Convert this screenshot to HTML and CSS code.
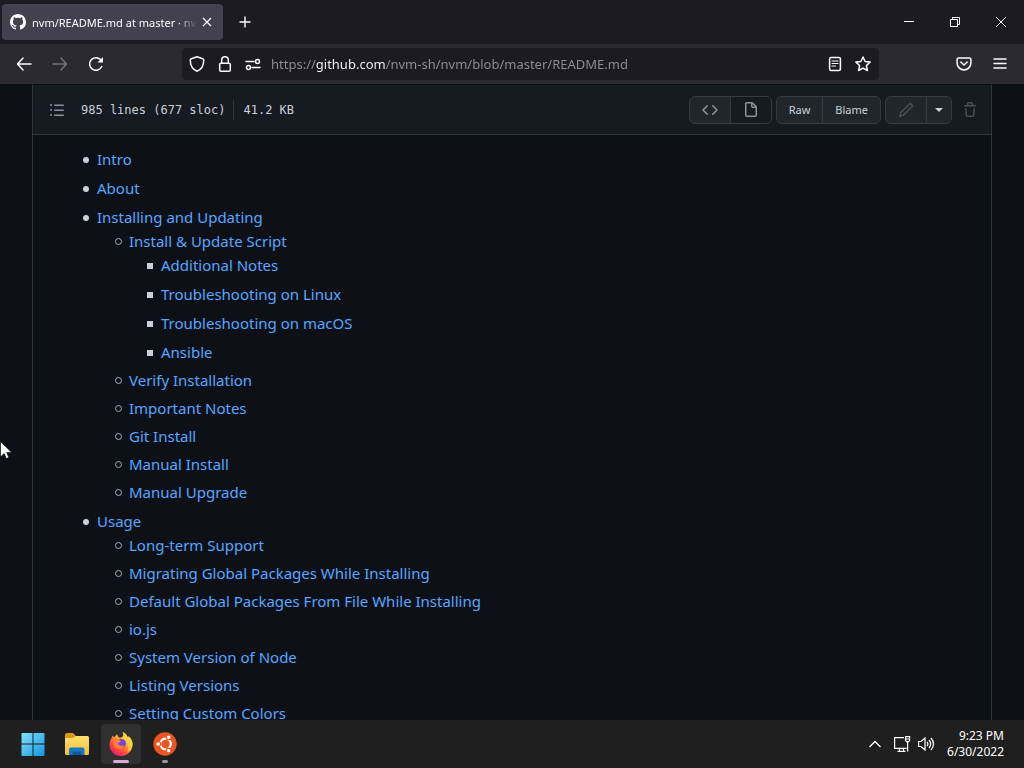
FILE: index.html
```html
<!DOCTYPE html>
<html lang="en">
<head>
<meta charset="utf-8">
<title>nvm/README.md at master · nvm-sh/nvm</title>
<link rel="stylesheet" href="styles.css">
</head>
<body>
<header class="titlebar">
  <div class="tab">
    <svg class="favicon" viewBox="0 0 16 16" width="16" height="16" fill="currentColor" aria-hidden="true"><path d="M8 0C3.58 0 0 3.58 0 8c0 3.54 2.29 6.53 5.47 7.59.4.07.55-.17.55-.38 0-.19-.01-.82-.01-1.49-2.01.37-2.53-.49-2.69-.94-.09-.23-.48-.94-.82-1.13-.28-.15-.68-.52-.01-.53.63-.01 1.08.58 1.23.82.72 1.21 1.87.87 2.33.66.07-.52.28-.87.51-1.07-1.78-.2-3.64-.89-3.64-3.95 0-.87.31-1.59.82-2.15-.08-.2-.36-1.02.08-2.12 0 0 .67-.21 2.2.82.64-.18 1.32-.27 2-.27.68 0 1.36.09 2 .27 1.53-1.04 2.2-.82 2.2-.82.44 1.1.16 1.92.08 2.12.51.56.82 1.27.82 2.15 0 3.07-1.87 3.75-3.65 3.95.29.25.54.73.54 1.48 0 1.07-.01 1.93-.01 2.2 0 .21.15.46.55.38A8.013 8.013 0 0016 8c0-4.42-3.58-8-8-8z"/></svg>
    <span class="tab-title">nvm/README.md at master · nvm</span>
    <button class="tab-close" type="button" aria-label="Close tab"><svg viewBox="0 0 10 10" width="10" height="10" fill="none" stroke="currentColor" stroke-width="1.2"><path d="M1 1l8 8M9 1L1 9"/></svg></button>
  </div>
  <button class="new-tab" type="button" aria-label="New tab"><svg viewBox="0 0 12 12" width="12" height="12" fill="none" stroke="currentColor" stroke-width="1.4"><path d="M6 .5v11M.5 6h11"/></svg></button>
  <div class="window-controls">
    <button type="button" aria-label="Minimize"><svg viewBox="0 0 10 10" width="10" height="10" fill="none" stroke="currentColor"><path d="M0 4.5h10"/></svg></button>
    <button type="button" aria-label="Restore"><svg viewBox="0 0 10 10" width="10" height="10" fill="none" stroke="currentColor"><path d="M.5 2.5h7v7h-7zM2.5 2.500V.5h7v7H7.500"/></svg></button>
    <button type="button" aria-label="Close"><svg viewBox="0 0 10 10" width="10" height="10" fill="none" stroke="currentColor"><path d="M0 0l10 10M10 0L0 10"/></svg></button>
  </div>
</header>

<nav class="toolbar" aria-label="Browser">
  <button class="tool" type="button" aria-label="Back"><svg viewBox="0 0 16 16" width="16" height="16" class="line"><path d="M15 8H1.500M7 2L1.500 8 7 14"/></svg></button>
  <button class="tool" type="button" aria-label="Forward" disabled><svg viewBox="0 0 16 16" width="16" height="16" class="line"><path d="M1 8h13.500M9 2l5.500 6L9 14"/></svg></button>
  <button class="tool" type="button" aria-label="Reload"><svg viewBox="0 0 16 16" width="16" height="16" class="line"><path d="M13.700 10.500A6.300 6.300 0 1 1 12.500 3.600L14 5"/><path d="M15 1v5.500H9.500z" fill="currentColor" stroke="none"/></svg></button>
  <div class="urlbar">
    <button type="button" aria-label="Tracking protection"><svg viewBox="0 0 16 16" width="16" height="16" class="line"><path d="M8 .8l5.700 2c.8.300 1 .8 1 1.500 0 5-2.200 9.200-6.700 10.900C3.500 13.500 1.300 9.300 1.300 4.300c0-.7.2-1.200 1-1.500z"/></svg></button>
    <button type="button" aria-label="Connection secure"><svg viewBox="0 0 16 16" width="16" height="16" class="line"><rect x="2.700" y="7.300" width="10.600" height="7.900" rx="1.300"/><path d="M4.700 7V4a3.300 3.300 0 0 1 6.600 0v3"/></svg></button>
    <button type="button" aria-label="Permissions"><svg viewBox="0 0 16 16" width="16" height="16" class="line"><path d="M1 5.500h8M7 11.500h8"/><circle cx="12.500" cy="5.500" r="2"/><circle cx="3.500" cy="11.500" r="2"/></svg></button>
    <input class="url" type="text" aria-label="Address" value="https://github.com/nvm-sh/nvm/blob/master/README.md">
    <button type="button" aria-label="Reader view"><svg viewBox="0 0 16 16" width="16" height="16" class="line"><rect x="2.600" y="1.600" width="10.800" height="12.800" rx="1.500"/><path stroke-width="1.200" d="M5 5h6M5 7.500h6M5 10h3.500"/></svg></button>
    <button type="button" aria-label="Bookmark"><svg viewBox="0 0 16 16" width="16" height="16" class="line"><path d="M8 1l2.100 4.500 5 .6-3.700 3.400 1 5L8 12.100l-4.400 2.400 1-5L.9 6.100l5-.6z"/></svg></button>
  </div>
  <button class="tool" type="button" aria-label="Save to Pocket"><svg viewBox="0 0 16 16" width="16" height="16" class="line"><path d="M2.500 2h11a1.400 1.400 0 0 1 1.400 1.400V7A6.900 6.900 0 0 1 1.100 7V3.400A1.400 1.400 0 0 1 2.500 2z"/><path d="M4.800 6L8 9l3.200-3"/></svg></button>
  <button class="tool" type="button" aria-label="Menu"><svg viewBox="0 0 16 16" width="16" height="16" class="line"><path d="M2 3h12M2 7.500h12M2 12h12"/></svg></button>
</nav>

<main class="page">
  <section class="file">
    <div class="file-header">
      <button class="bare" type="button" aria-label="Table of contents"><svg viewBox="0 0 16 16" width="16" height="16" fill="currentColor"><path d="M2 4a1 1 0 100-2 1 1 0 000 2zm3.750-1.500a.75.75 0 000 1.500h8.500a.75.75 0 000-1.500h-8.500zm0 5a.75.75 0 000 1.500h8.500a.75.75 0 000-1.500h-8.500zm0 5a.75.75 0 000 1.500h8.500a.75.75 0 000-1.500h-8.500zM3 8a1 1 0 11-2 0 1 1 0 012 0zm-1 6a1 1 0 100-2 1 1 0 000 2z"/></svg></button>
      <div class="file-info"><span>985 lines (677 sloc)</span><span class="size">41.2 KB</span></div>
      <div class="actions">
        <div class="group wide">
          <button type="button" aria-label="Source"><svg viewBox="0 0 16 16" width="16" height="16" fill="currentColor"><path d="M4.720 3.220a.75.75 0 011.060 1.060L2.060 8l3.720 3.720a.75.75 0 11-1.060 1.060L.47 8.530a.75.75 0 010-1.060l4.250-4.250zm6.560 0a.75.75 0 10-1.060 1.060L13.940 8l-3.720 3.720a.75.75 0 101.060 1.060l4.250-4.250a.75.75 0 000-1.060l-4.250-4.250z"/></svg></button>
          <button class="selected" type="button" aria-label="Rendered"><svg viewBox="0 0 16 16" width="16" height="16" fill="currentColor"><path d="M3.750 1.500a.25.25 0 00-.25.25v11.500c0 .138.112.25.25.25h8.500a.25.25 0 00.25-.25V6H9.750A1.750 1.750 0 018 4.250V1.500H3.750zm5.750.56v2.190c0 .138.112.25.25.25h2.190L9.500 2.060zM2 1.750C2 .784 2.784 0 3.750 0h5.086c.464 0 .909.184 1.237.513l3.414 3.414c.329.328.513.773.513 1.237v8.086A1.750 1.750 0 0112.250 15h-8.500A1.750 1.750 0 012 13.250V1.750z"/></svg></button>
        </div>
        <div class="group">
          <button type="button">Raw</button>
          <button type="button">Blame</button>
        </div>
        <div class="group edit">
          <button type="button" aria-label="Edit" disabled><svg viewBox="0 0 16 16" width="16" height="16" fill="currentColor"><path d="M11.013 1.427a1.750 1.750 0 012.474 0l1.086 1.086a1.750 1.750 0 010 2.474l-8.610 8.610c-.21.21-.47.364-.756.445l-3.251.93a.75.75 0 01-.927-.928l.929-3.250a1.750 1.750 0 01.445-.758l8.610-8.610zm1.414 1.060a.25.25 0 00-.354 0L4.200 10.360l-.8.845-.558 1.953 1.953-.558 8.718-8.673a.25.25 0 000-.354l-1.086-1.086z"/></svg></button>
          <button class="caret" type="button" aria-label="More edit options"><svg viewBox="0 0 8 4" width="8" height="4" fill="currentColor"><path d="M0 0h8L4 4z"/></svg></button>
        </div>
        <button class="bare trash" type="button" aria-label="Delete" disabled><svg viewBox="0 0 16 16" width="16" height="16" fill="currentColor"><path fill-rule="evenodd" d="M6.500 1.750a.25.25 0 01.25-.25h2.500a.25.25 0 01.25.25V3h-3V1.750zm4.500 0V3h2.250a.75.75 0 010 1.500H2.750a.75.75 0 010-1.500H5V1.750C5 .784 5.784 0 6.750 0h2.500C10.216 0 11 .784 11 1.750zM4.496 6.675a.75.75 0 10-1.492.15l.66 6.600A1.750 1.750 0 005.405 15h5.190c.9 0 1.652-.681 1.741-1.576l.66-6.600a.75.75 0 00-1.492-.149l-.66 6.600a.25.25 0 01-.249.225h-5.190a.25.25 0 01-.249-.225l-.66-6.600z"/></svg></button>
      </div>
    </div>
    <ul class="toc">
      <li><a href="#intro">Intro</a></li>
      <li><a href="#about">About</a></li>
      <li><a href="#installing">Installing and Updating</a>
        <ul>
          <li><a href="#script">Install &amp; Update Script</a>
            <ul>
              <li><a href="#notes">Additional Notes</a></li>
              <li><a href="#linux">Troubleshooting on Linux</a></li>
              <li><a href="#macos">Troubleshooting on macOS</a></li>
              <li><a href="#ansible">Ansible</a></li>
            </ul>
          </li>
          <li><a href="#verify">Verify Installation</a></li>
          <li><a href="#important">Important Notes</a></li>
          <li><a href="#git">Git Install</a></li>
          <li><a href="#manual-install">Manual Install</a></li>
          <li><a href="#manual-upgrade">Manual Upgrade</a></li>
        </ul>
      </li>
      <li><a href="#usage">Usage</a>
        <ul>
          <li><a href="#lts">Long-term Support</a></li>
          <li><a href="#migrating">Migrating Global Packages While Installing</a></li>
          <li><a href="#default">Default Global Packages From File While Installing</a></li>
          <li><a href="#iojs">io.js</a></li>
          <li><a href="#system">System Version of Node</a></li>
          <li><a href="#listing">Listing Versions</a></li>
          <li><a href="#colors">Setting Custom Colors</a></li>
        </ul>
      </li>
    </ul>
  </section>
</main>

<footer class="taskbar">
  <div class="apps">
    <button type="button" aria-label="Start"><svg viewBox="0 0 24 24" width="24" height="24"><defs><linearGradient id="win" x1="0" y1="0" x2="1" y2="1"><stop offset="0" stop-color="#7fe3fb"/><stop offset="1" stop-color="#1395e0"/></linearGradient></defs><path fill="url(#win)" d="M1.500 1H11.500V11.500H.5V2Q.5 1 1.500 1zM12.500 1h10q1 0 1 1v9.500h-11zM.5 12.500h11V24h-10q-1 0-1-1zM12.500 12.500h11V23q0 1-1 1h-10z"/></svg></button>
    <button type="button" aria-label="File Explorer"><svg viewBox="0 0 24 24" width="24" height="24"><defs><linearGradient id="fold" x1="0" y1="0" x2="0" y2="1"><stop offset="0" stop-color="#ffe071"/><stop offset="1" stop-color="#f5bd34"/></linearGradient></defs><path fill="#d99a16" d="M0 3q0-2 2-2h6l3 3v4H0z"/><path fill="url(#fold)" d="M0 6h8l3-2h11.500Q24 4 24 5.500v16q0 1.500-1.500 1.500h-21Q0 23 0 21.500z"/><path fill="#1678c2" d="M4 23v-5.500q0-2 2-2h11.500q2 0 2 2V23z"/><path fill="#0f579b" d="M7.500 19.500h9V23h-9z"/></svg></button>
    <button class="active" type="button" aria-label="Firefox"><svg viewBox="0 0 24 24" width="24" height="24"><defs><linearGradient id="fox" x1=".85" y1=".1" x2=".2" y2=".95"><stop offset="0" stop-color="#fff044"/><stop offset=".35" stop-color="#ffb02e"/><stop offset=".65" stop-color="#ff5638"/><stop offset="1" stop-color="#ec1770"/></linearGradient></defs><path fill="url(#fox)" d="M13.500 0c3 1.200 5 3.600 5.700 6.400.2-.8.100-1.700-.1-2.500 3 2 4.500 5.300 4.500 8.700C23.600 19 18.500 24 12 24S.6 19 .6 12.700c0-2.700.8-5.200 2.300-7.200l.4-2 2 1.700C6.400 4.500 7 2.900 8.200 2c0 1.500.8 2.900 2.300 3.700 1.500.3 2.500-.3 3.400-1.400.9-1.300.7-3-.4-4.300z"/><circle cx="12.300" cy="11.500" r="4.600" fill="#7542e5"/><path fill="#ff812f" d="M4.800 7.200c3-.8 5.800.2 7.100 1.800-.3 1.200-2.700 1.500-3 2.600 1.400 2.700 4.200 2.600 6.200 1.500-.7 3.700-4.600 5.200-7.500 3.400C4.400 14.500 3.500 10.500 4.800 7.200z"/><path fill="#ffd53c" d="M13.500 0c3 1.200 5 3.600 5.700 6.400.2-.8.100-1.700-.1-2.500 3 2 4.500 5.300 4.500 8.700-1 4-2.300 5.900-4.800 7.400 1-4.800.6-10-4.900-13.700.9-1.800.8-4-.4-6.300z" opacity=".75"/></svg><span class="mark"></span></button>
    <button class="running" type="button" aria-label="Ubuntu"><svg viewBox="0 0 24 24" width="24" height="24"><circle cx="12" cy="12" r="11.700" fill="#e95420"/><circle cx="12.500" cy="12" r="5.300" fill="none" stroke="#fff" stroke-width="2.200"/><g stroke="#e95420" stroke-width="1.200" fill="#fff"><circle cx="5.200" cy="12" r="2.400"/><circle cx="15.700" cy="5.400" r="2.400"/><circle cx="15.700" cy="18.600" r="2.400"/></g></svg><span class="mark"></span></button>
  </div>
  <div class="tray">
    <button type="button" aria-label="Show hidden icons"><svg viewBox="0 0 12 8" width="12" height="8" fill="none" stroke="currentColor" stroke-width="1.300"><path d="M.5 7L6 1.500 11.500 7"/></svg></button>
    <button type="button" aria-label="Network"><svg viewBox="0 0 18 18" width="18" height="18" fill="none" stroke="currentColor" stroke-width="1.200"><path d="M11 2.600H1.600v10.800h12M4.500 16.400h8M6.500 13.500v3M10.500 13.500v3M12.600 1.600h4v4l-1 1h-2l-1-1zM14.600 6.600v10M13 4h3.500"/></svg></button>
    <button type="button" aria-label="Volume"><svg viewBox="0 0 18 16" width="18" height="16" fill="none" stroke="currentColor" stroke-width="1.200"><path d="M1.600 5.500H4L8 2v12l-4-3.500H1.600zM10 5.800q1.800 2.200 0 4.400M12 4q3.300 4 0 8M14 2q5 6 0 12"/></svg></button>
    <time class="clock" datetime="2022-06-30T21:23"><span>9:23 PM</span><span>6/30/2022</span></time>
  </div>
</footer>

<svg class="pointer" viewBox="0 0 12 18" width="12" height="18" aria-hidden="true"><path fill="#fff" stroke="#000" stroke-width=".6" d="M.5.5v15.500l3.600-3.400 2.300 5 2.500-1-2.200-5h5z"/></svg>
</body>
</html>
```
FILE: styles.css
```css
*, *::before { box-sizing: border-box; }

body {
  margin: 0;
  height: 100vh;
  display: flex;
  flex-direction: column;
  overflow: hidden;
  background: #0d1117;
  color: #c9d1d9;
  font-family: "Noto Sans", "Open Sans", sans-serif;
  font-size: 15px;
}

button {
  display: inline-flex;
  align-items: center;
  justify-content: center;
  padding: 0;
  border: 0;
  background: none;
  color: inherit;
  font: inherit;
}

svg { flex: none; }

.line {
  fill: none;
  stroke: currentColor;
  stroke-width: 1.5;
  stroke-linecap: round;
  stroke-linejoin: round;
}

/* Tab strip */
.titlebar {
  flex: none;
  display: flex;
  height: 44px;
  padding-left: 2px;
  background: #1c1b22;
  color: #fbfbfe;
}

.tab {
  display: flex;
  align-items: center;
  width: 221px;
  height: 36px;
  margin-top: 4px;
  padding: 0 6px 0 8px;
  border-radius: 4px;
  background: #42414d;
}

.tab-title {
  flex: 1;
  min-width: 0;
  margin-left: 6px;
  overflow: hidden;
  white-space: nowrap;
  font-size: 11px;
  -webkit-mask-image: linear-gradient(to left, transparent, #000 20px);
  mask-image: linear-gradient(to left, transparent, #000 20px);
}

.tab-close { width: 20px; height: 20px; }
.new-tab { width: 36px; margin-left: 4px; }

.window-controls {
  display: flex;
  margin-left: auto;
}
.window-controls button { width: 46px; }

/* Navigation toolbar */
.toolbar {
  flex: none;
  display: flex;
  align-items: center;
  height: 40px;
  padding: 0 6px;
  background: #2b2a33;
  color: #fbfbfe;
}

.tool { width: 36px; height: 32px; }
.tool:disabled { color: #74737b; }

.urlbar {
  flex: 1;
  display: flex;
  align-items: center;
  height: 32px;
  margin: 0 67px 0 68px;
  padding: 0 2px 0 1px;
  border-radius: 4px;
  background: #1c1b22;
}
.urlbar button { width: 28px; height: 28px; }

.url {
  flex: 1;
  min-width: 0;
  padding: 0;
  margin-left: 4px;
  border: 0;
  outline: 0;
  font: inherit;
  font-size: 13px;
  color: transparent;
  background: linear-gradient(to right, #8f8f98 45px, #fbfbfe 45px, #fbfbfe 115px, #8f8f98 115px);
  -webkit-background-clip: text;
  background-clip: text;
}

/* File view */
.page {
  flex: 1;
  min-height: 0;
  overflow: hidden;
  padding: 0 32px;
}

.file {
  border: 1px solid #30363d;
  border-top-color: #0d1117;
}

.file-header {
  display: flex;
  align-items: center;
  height: 50px;
  padding: 0 13px 0 16px;
  border-bottom: 1px solid #30363d;
  background: #161b22;
}

.bare { color: #8b949e; }
.trash { margin-left: 6px; }
.trash:disabled { color: #484f58; }

.file-info {
  display: flex;
  align-items: center;
  margin-left: 16px;
  font: 12px/20px "DejaVu Sans Mono", monospace;
}

.size {
  margin-left: 7px;
  padding-left: 10px;
  border-left: 1px solid #30363d;
}

.actions {
  display: flex;
  align-items: center;
  gap: 4px;
  margin-left: auto;
}

.group {
  display: flex;
  height: 28px;
  border: 1px solid #363b42;
  border-radius: 6px;
  overflow: hidden;
  background: #21262d;
  font-size: 11px;
}
.group button { padding: 0 12px; }
.group button + button { border-left: 1px solid #363b42; }
.wide button { width: 40px; padding: 0; color: #8b949e; }
.wide button + button { width: 41px; }
.group .selected { background: #161b22; }
.edit button { width: 40px; padding: 0; }
.edit button:disabled { color: #484f58; }
.edit .caret { width: 25px; }

.toc {
  margin: 0;
  padding: 12px 32px 32px 64px;
  line-height: 24px;
}
.toc, .toc ul { list-style: none; }
.toc ul { margin: 0; padding-left: 32px; }
.toc a { color: #58a6ff; text-decoration: none; }
.toc li + li { margin-top: 5px; }
.toc ul li + li { margin-top: 4px; }
.toc ul ul li + li { margin-top: 5px; }

/* Bullets: disc, ring, square by depth */
.toc li::before {
  content: "";
  display: inline-block;
  width: 6px;
  height: 6px;
  margin: 0 8px 0 -14px;
  vertical-align: 2px;
  border-radius: 50%;
  background: #c9d1d9;
}
.toc ul li::before {
  width: 7px;
  height: 7px;
  border: 1px solid #a3aab2;
  margin-right: 7px;
  background: none;
}
.toc ul ul li::before {
  width: 6px;
  height: 6px;
  border: 0;
  margin-right: 8px;
  border-radius: 0;
  background: #c9d1d9;
}

/* Desktop taskbar */
.taskbar {
  flex: none;
  display: flex;
  align-items: center;
  justify-content: space-between;
  height: 48px;
  padding: 0 20px 0 13px;
  background: #1f1f1f;
  color: #fff;
}

.apps { display: flex; gap: 4px; }
.apps button {
  position: relative;
  width: 40px;
  height: 40px;
  border-radius: 4px;
}
.apps .active { background: #303030; }

.mark {
  position: absolute;
  bottom: 1px;
  width: 16px;
  height: 3px;
  border-radius: 2px;
  background: #d8a9d6;
}
.running .mark { width: 6px; background: #9a9a9a; }

.tray {
  display: flex;
  align-items: center;
  gap: 6px;
}
.tray button:first-child { margin-right: 6px; }

.clock {
  display: flex;
  flex-direction: column;
  align-items: flex-end;
  margin-left: 6px;
  font-size: 12px;
  line-height: 16px;
}

.pointer {
  position: absolute;
  left: 0;
  top: 441px;
}
```
